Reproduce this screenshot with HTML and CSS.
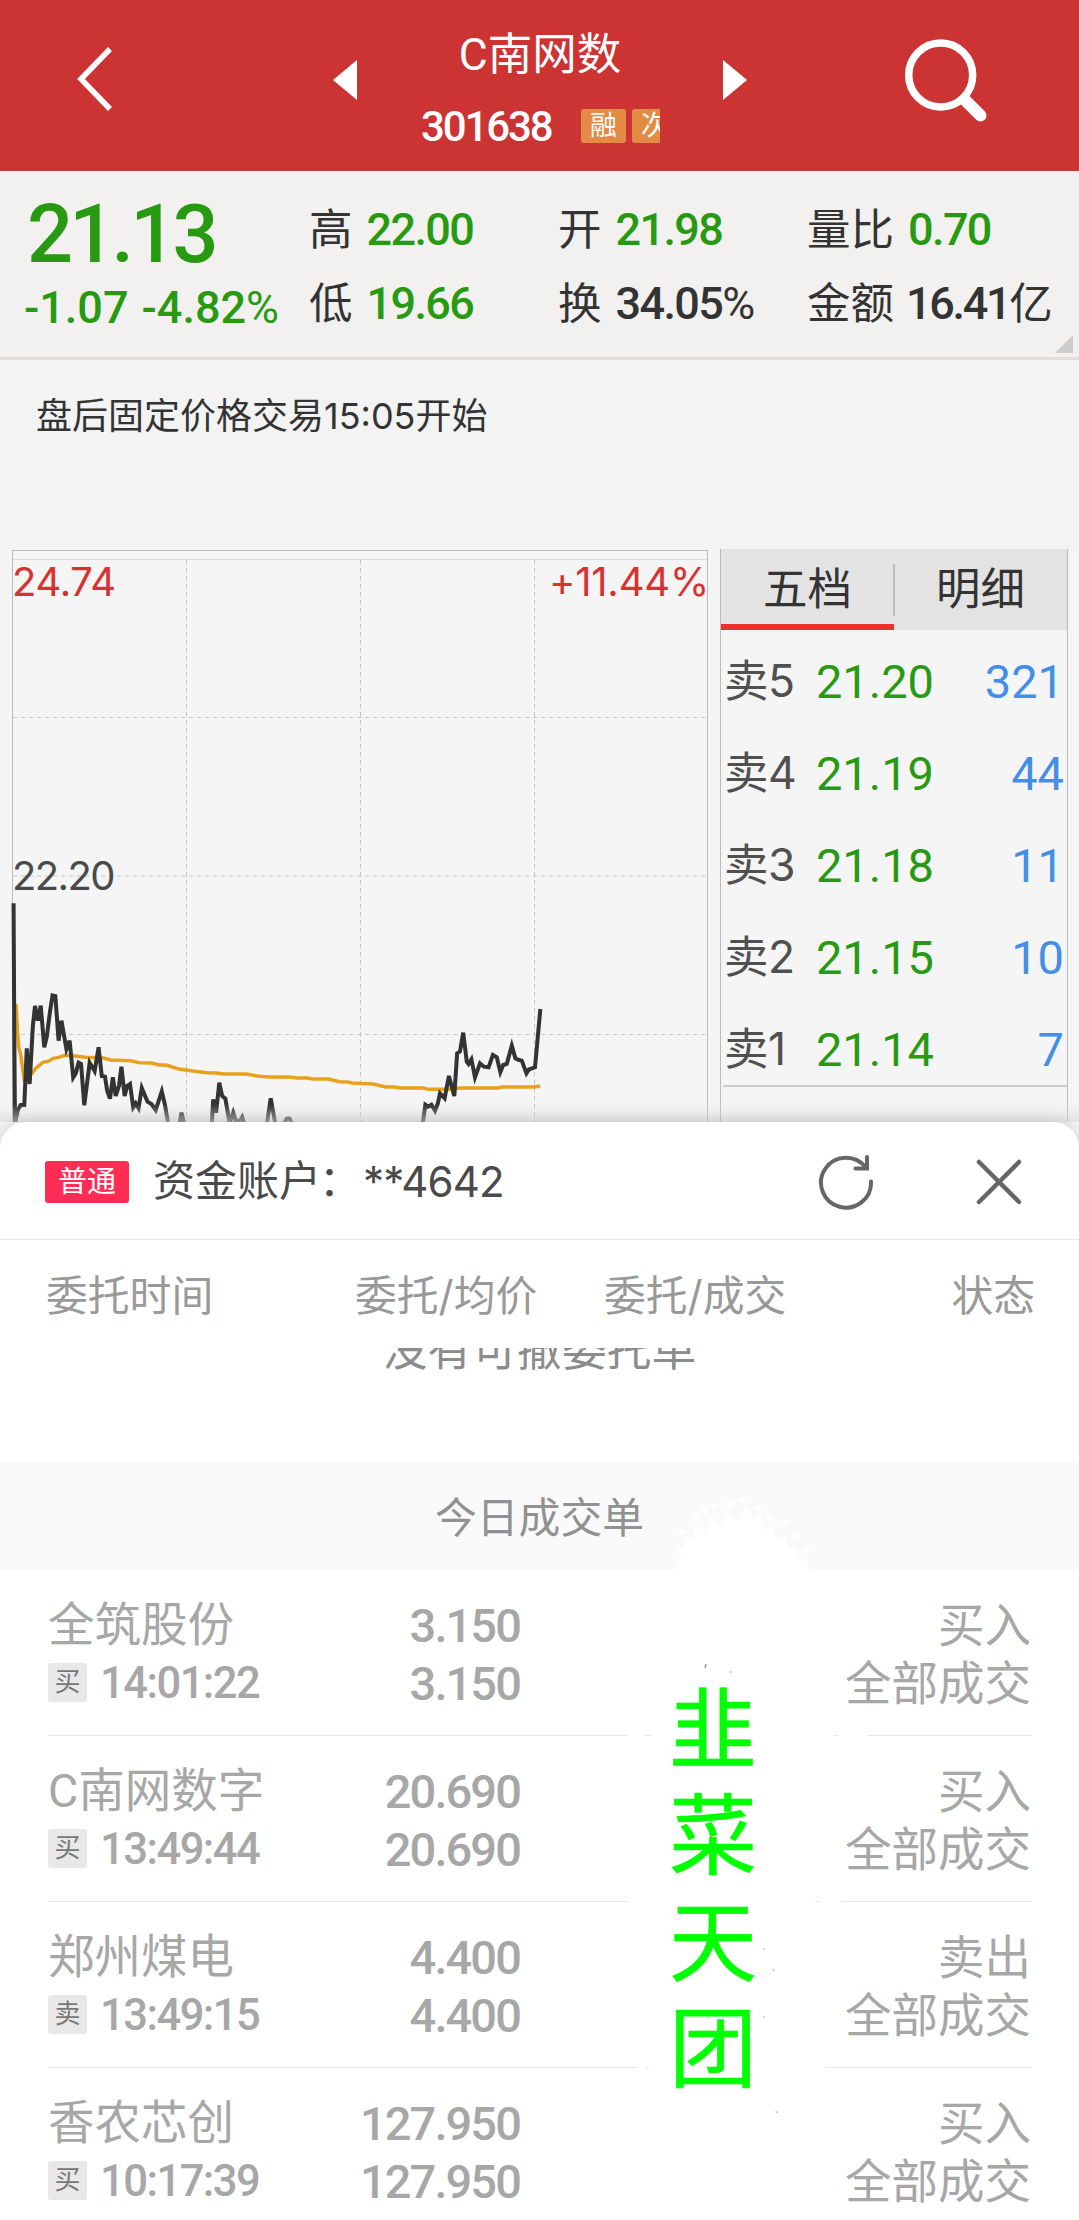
FILE: index.html
```html
<!DOCTYPE html>
<html lang="zh-CN">
<head>
<meta charset="utf-8">
<title>C南网数 301638</title>
<link rel="stylesheet" href="styles.css">
</head>
<body>
<div class="screen">
  <header class="topbar">
    <svg class="back" width="40" height="70" viewBox="0 0 40 70"><path d="M35 5L6 35L35 65" fill="none" stroke="#fff" stroke-width="5.5"/></svg>
    <svg class="prev" width="24" height="40" viewBox="0 0 24 40"><path d="M24 0V40L0 20Z" fill="#fff"/></svg>
    <div class="title">
      <div class="name">C南网数</div>
      <div class="code"><span class="num">301638</span><span class="tags"><i>融</i><i>次</i></span></div>
    </div>
    <svg class="next" width="24" height="40" viewBox="0 0 24 40"><path d="M0 0V40L24 20Z" fill="#fff"/></svg>
    <svg class="search" width="90" height="90" viewBox="0 0 90 90" fill="none" stroke="#fff"><circle cx="39.7" cy="40" r="32" stroke-width="7.5"/><path d="M65 66L79.500 80.500" stroke-width="12" stroke-linecap="round"/></svg>
  </header>

  <section class="quote">
    <div class="last"><div class="price num">21.13</div><div class="chg num"><span>-1.07</span><span>-4.82<b>%</b></span></div></div>
    <div class="cell c1"><p>高<em class="num g">22.00</em></p><p>低<em class="num g">19.66</em></p></div>
    <div class="cell c2"><p>开<em class="num g">21.98</em></p><p>换<em class="num">34.05<b>%</b></em></p></div>
    <div class="cell c3"><p>量比<em class="num g">0.70</em></p><p>金额<em class="num amt">16.41</em>亿</p></div>
    <svg class="corner" width="18" height="18" viewBox="0 0 18 18"><path d="M18 0V18H0Z" fill="#ccc"/></svg>
  </section>

  <div class="notice">盘后固定价格交易15:05开始</div>

  <section class="market">
    <div class="chart">
      <svg width="720" height="573" viewBox="0 549 720 573" fill="none">
        <path d="M12.5 1122V550.5H707.5V1122" stroke="#bbb"/>
        <path d="M13 559.5H707" stroke="#ddd"/>
        <path d="M186.500 560V1122M360.500 560V1122M534.500 560V1122" stroke="#c4c4c4" stroke-dasharray="4.500 3.500"/>
        <path d="M13 717.500H707M13 876H707M13 1034.500H707" stroke="#c8c8c8" stroke-dasharray="4.500 3.500"/>
        <g transform="translate(0 880) scale(.35714 .33333)" stroke-width="4">
          <polyline vector-effect="non-scaling-stroke" stroke="#e8a11c" stroke-width="3.500" points="45,372 49,450 52,500 58,525 68,600 78,590 90,580 100,565 120,547 135,544 150,535 165,532 182,526 210,528 240,532 290,534 310,540 365,542 390,548 425,549 445,555 465,555 500,567 545,574 580,578 605,579 625,582 690,582 720,588 750,591 810,591 830,594 860,594 875,597 920,597 950,605 975,606 985,609 1045,612 1080,621 1105,621 1120,624 1185,624 1200,628 1270,628 1285,624 1395,624 1405,621 1497,621 1512,618"/>
          <polyline vector-effect="non-scaling-stroke" stroke="#333" points="38,70 40,460 42,730 50,690 58,675 68,675 75,505 83,612 92,438 98,378 106,422 114,377 124,502 131,470 140,395 147,346 155,348 164,482 172,422 186,507 195,482 205,592 212,580 220,548 227,552 236,676 251,548 265,573 276,502 285,588 294,590 300,632 308,656 316,592 324,648 333,618 340,560 349,648 356,618 364,612 373,682 380,670 388,684 397,624 413,665 424,672 436,690 453,634 462,675 474,750 500,750 508,698 520,750 592,750 597,658 605,698 614,608 622,648 631,656 643,730 653,698 661,725 672,722 678,711 690,750 745,750 758,655 774,750 795,730 803,716 811,716 825,750 1178,750 1185,720 1191,674 1199,680 1208,674 1218,692 1226,670 1232,640 1245,655 1257,588 1272,648 1280,520 1288,514 1297,458 1307,545 1312,552 1320,538 1330,592 1344,550 1355,560 1368,562 1380,525 1391,532 1401,576 1409,555 1419,552 1433,497 1443,535 1453,540 1461,542 1474,580 1481,568 1498,562 1513,387"/>
        </g>
      </svg>
      <span class="lab hi">24.74</span><span class="lab pct">+11.44%</span><span class="lab mid">22.20</span>
    </div>
    <div class="book">
      <div class="tabs"><span class="on">五档</span><span>明细</span></div>
      <div class="lv"><span>卖5</span><b>21.20</b><i>321</i></div>
      <div class="lv"><span>卖4</span><b>21.19</b><i>44</i></div>
      <div class="lv"><span>卖3</span><b>21.18</b><i>11</i></div>
      <div class="lv"><span>卖2</span><b>21.15</b><i>10</i></div>
      <div class="lv"><span>卖1</span><b>21.14</b><i>7</i></div>
      <div class="rule"></div>
    </div>
    <div class="fade"></div>
  </section>

  <section class="sheet">
    <div class="acct">
      <span class="kind">普通</span><span class="who">资金账户<u>：</u></span><span class="no">**4642</span>
      <svg class="refresh" width="60" height="60" viewBox="0 0 60 60" fill="none" stroke="#666" stroke-width="4" stroke-linecap="round"><path d="M55 29.500A25 25 0 1 1 49.500 15"/><path d="M51 5V16.500H39.500"/></svg>
      <svg class="close" width="48" height="48" viewBox="0 0 48 48" fill="none" stroke="#666" stroke-width="4.500" stroke-linecap="round"><path d="M4 4L44 44M44 4L4 44"/></svg>
    </div>
    <div class="cols"><span>委托时间</span><span>委托/均价</span><span>委托/成交</span><span>状态</span></div>
    <div class="empty"><span>没有可撤委托单</span></div>
    <div class="band">今日成交单
      <svg class="spray" width="150" height="74" viewBox="0 0 150 74" fill="#fff"><path d="M6 74L14 62 8 54 19 50 16 40 27 42 24 28 38 36 44 20 52 32 58 16 69 25 78 10 86 24 92 18 96 34 105 30 109 42 118 40 120 52 130 50 128 61 138 64 142 74Z"/><circle cx="28" cy="20" r="4"/><circle cx="36" cy="14" r="4"/><circle cx="46" cy="10" r="3"/><circle cx="62" cy="9" r="4"/><circle cx="74" cy="4" r="3"/><circle cx="90" cy="12" r="3"/><circle cx="118" cy="26" r="3"/><circle cx="102" cy="22" r="3"/><circle cx="14" cy="36" r="3"/><circle cx="128" cy="40" r="3"/><circle cx="138" cy="54" r="3"/></svg>
    </div>
    <div class="trades">
      <div class="trade">
        <div class="l"><div class="nm">全筑股份</div><div class="tm"><i>买</i><span class="num">14:01:22</span></div></div>
        <div class="p num"><div>3.150</div><div>3.150</div></div>
        <div class="s"><div>买入</div><div>全部成交</div></div>
        <div class="ln"><i style="width:579px"></i><i style="width:164px"></i></div>
      </div>
      <div class="trade">
        <div class="l"><div class="nm">C南网数字</div><div class="tm"><i>买</i><span class="num">13:49:44</span></div></div>
        <div class="p num"><div>20.690</div><div>20.690</div></div>
        <div class="s"><div>买入</div><div>全部成交</div></div>
        <div class="ln"><i style="width:580px"></i><i style="width:191px"></i></div>
      </div>
      <div class="trade">
        <div class="l"><div class="nm">郑州煤电</div><div class="tm"><i>卖</i><span class="num">13:49:15</span></div></div>
        <div class="p num"><div>4.400</div><div>4.400</div></div>
        <div class="s"><div>卖出</div><div>全部成交</div></div>
        <div class="ln"><i style="width:590px"></i><i style="width:207px"></i></div>
      </div>
      <div class="trade">
        <div class="l"><div class="nm">香农芯创</div><div class="tm"><i>买</i><span class="num">10:17:39</span></div></div>
        <div class="p num"><div>127.950</div><div>127.950</div></div>
        <div class="s"><div>买入</div><div>全部成交</div></div>
      </div>
      <svg class="specks" width="220" height="480" viewBox="0 0 220 480" fill="none"><path d="M66 94L65 98" stroke="#999" stroke-width="1.500"/><path d="M91 101v2M124 378v2M133 399l1 2M123 447h2M136 541l1 2" stroke="#aaa"/><path d="M5 165.500h6M193 165.500h5M175 331.500h5M5 497.500h4" stroke="#e8e8e8"/></svg>
      <div class="stamp"><span>韭</span><span>菜</span><span>天</span><span>团</span></div>
    </div>
  </section>
</div>
</body>
</html>
```
FILE: styles.css
```css
* { box-sizing: border-box; margin: 0; padding: 0; }
i, em { font-style: normal; }
body { width: 1079px; height: 2220px; overflow: hidden; background: #f3f3f3; font-family: Inter, "Noto Sans CJK SC", sans-serif; color: #333; }
.screen { width: 1079px; height: 2220px; overflow: hidden; display: flex; flex-direction: column; }
.num { font-family: Roboto, "Noto Sans CJK SC", sans-serif; font-weight: 500; }
.g { color: #279a12; }

.topbar { height: 171px; flex: none; background: #cc3333; border-bottom: 1px solid #b54040; color: #fff; display: flex; align-items: flex-start; }
.back { margin: 44px 0 0 75px; }
.prev { margin: 60px 0 0 218px; }
.title { width: 366px; padding: 0 63px; }
.name { margin-top: 28px; height: 54px; line-height: 54px; font-size: 44.500px; text-align: center; font-family: Roboto, "Noto Sans CJK SC", sans-serif; }
.code { margin-top: 16px; height: 56px; display: flex; align-items: center; width: 240px; overflow: hidden; }
.code .num { font-size: 42px; letter-spacing: -2.100px; width: 160px; margin-left: 1px; flex: none; }
.tags { display: flex; gap: 6px; }
.tags i { width: 45px; height: 34px; flex: none; border-radius: 3px; background: #e38b45; font-size: 27px; line-height: 34px; text-align: center; }
.next { margin: 60px 0 0 0; }
.search { margin: 35px 0 0 154px; }

.quote { height: 189px; flex: none; background: #f2f1ef; border-bottom: 3px solid #dedede; display: flex; position: relative; }
.last { width: 309px; color: #279a12; }
.price { margin: 24px 0 0 27px; height: 80px; line-height: 80px; font-size: 81px; letter-spacing: -3.800px; }
.chg { margin: 8px 0 0 24px; height: 50px; line-height: 50px; font-size: 45px; letter-spacing: 0; display: flex; gap: 13px; white-space: nowrap; }
.num b { font-weight: 400; }
.cell { white-space: nowrap; }
.cell p { height: 74px; line-height: 73px; font-size: 43.500px; }
.cell p:first-child { margin-top: 22px; }
.cell em { font-size: 45px; letter-spacing: -1.600px; margin-left: 14px; }
.cell .amt { letter-spacing: -2.300px; margin-left: 12px; }
.c1 { width: 249px; }
.c2 { width: 249px; }
.corner { position: absolute; right: 6px; bottom: 4px; }

.notice { height: 189px; flex: none; padding: 31px 0 0 36px; font-size: 36px; line-height: 50px; }

.market { height: 573px; flex: none; display: flex; position: relative; background: #f5f5f5; }
.chart { width: 720px; position: relative; }
.chart svg { display: block; }
.lab { position: absolute; font-size: 40px; line-height: 48px; color: #4a4a4a; }
.hi { left: 12px; top: 9px; color: #d9312f; letter-spacing: -.300px; }
.pct { right: 11px; top: 9px; color: #d9312f; letter-spacing: -.200px; }
.mid { left: 12px; top: 303px; letter-spacing: -1.600px; }
.book { width: 348px; border: solid #bbb; border-width: 0 1px; }
.tabs { height: 81px; background: #e3e3e3; display: flex; }
.tabs span { width: 173px; height: 81px; line-height: 80px; text-align: center; font-size: 44.500px; position: relative; }
.tabs .on { border-bottom: 6px solid #ea3030; }
.tabs .on::after { content: ""; position: absolute; right: -1px; top: 15px; width: 2px; height: 52px; background: #bbb; }
.lv { height: 92px; line-height: 103px; font-size: 47px; display: grid; grid-template-columns: 72px 138px 1fr; padding: 0 3px; }
.lv span { color: #505050; font-size: 44.500px; letter-spacing: -.500px; white-space: nowrap; }
.lv b, .lv i { font-family: Roboto, sans-serif; text-align: right; }
.lv b { font-weight: 400; color: #279a12; }
.lv i { color: #438ee8; }
.rule { height: 2px; background: #ccc; margin: -5px 0 0 2px; }
.fade { position: absolute; left: 0; right: 0; bottom: 0; height: 18px; background: linear-gradient(rgba(222,222,222,0), rgba(216,216,216,.6)); }

.sheet { height: 1098px; flex: none; background: #fff; border-radius: 26px 26px 0 0; box-shadow: 0 0 14px rgba(0,0,0,.15); position: relative; }
.acct { height: 118px; border-bottom: 1px solid #e8e8e8; display: flex; align-items: center; padding: 2px 0 0 45px; color: #4a4a4a; font-size: 42px; }
.kind { width: 84px; height: 42px; line-height: 42px; border-radius: 3px; background: #ff2d55; color: #fff; font-size: 29px; text-align: center; }
.who { margin-left: 24px; width: 210px; height: 60px; line-height: 58px; white-space: nowrap; }
.who u { text-decoration: none; margin-left: -2px; }
.refresh { margin-left: 313px; }
.no { width: 140px; letter-spacing: -.900px; }
.close { margin-left: 99px; }
.cols { height: 108px; line-height: 112px; display: grid; grid-template-columns: 309px 249px 1fr auto; padding: 0 44px 0 46px; font-size: 41.800px; color: #999; }
.empty { height: 114px; overflow: hidden; text-align: center; font-size: 44.800px; line-height: 60px; color: #8c8c8c; }
.empty span { display: block; margin-top: -28px; }
.band { height: 108px; line-height: 112px; background: #fafafa; text-align: center; font-size: 41.800px; color: #919191; position: relative; }
.spray { position: absolute; left: 668px; bottom: 0; }
.trades { position: relative; }
.trade { height: 166px; color: #a7a7a7; position: relative; display: flex; padding: 0 48px; font-size: 46.500px; line-height: 58px; }
.l { width: 260px; padding-top: 26px; }
.nm { white-space: nowrap; font-family: Roboto, "Noto Sans CJK SC", sans-serif; }
.tm { display: flex; align-items: center; height: 57px; }
.tm i { width: 39px; height: 39px; line-height: 38px; text-align: center; border-radius: 3px; background: #e8e8e8; color: #777; font-size: 26px; margin: -1px 13px 0 0; }
.tm .num { font-size: 43.500px; letter-spacing: -1.500px; padding-top: 2px; }
.p { width: 212px; text-align: right; padding-top: 27px; font-size: 47px; letter-spacing: -1.900px; }
.s { flex: 1; text-align: right; padding-top: 26px; }
.ln { position: absolute; left: 48px; right: 47px; bottom: 0; display: flex; justify-content: space-between; }
.ln i { height: 1px; background: #e8e8e8; }
.specks { position: absolute; left: 640px; top: 0; overflow: visible; }
.stamp { position: absolute; left: 669px; top: 106px; width: 88px; color: #00ff00; font-size: 88px; line-height: 106.300px; display: flex; flex-direction: column; -webkit-text-stroke: .6px #00ff00; }
```
